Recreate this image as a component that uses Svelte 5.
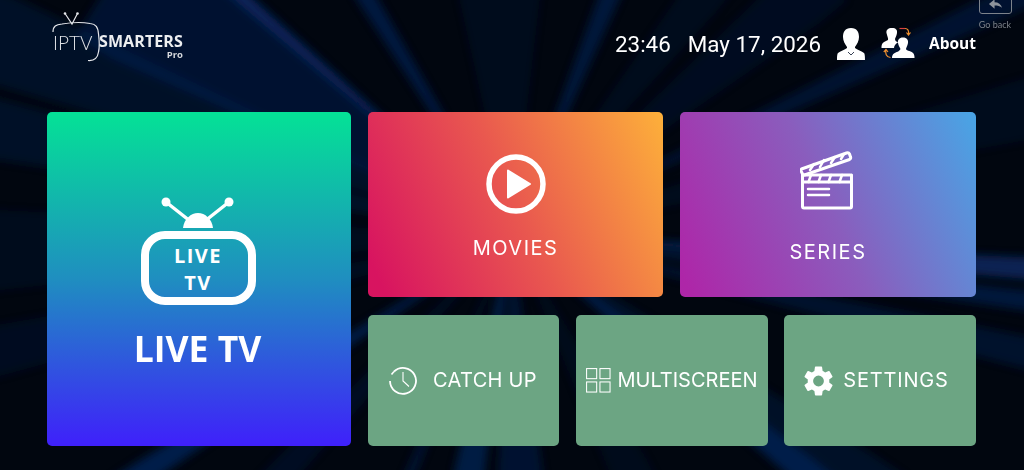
<script lang="ts">
	// end point on the page edge, half width there, opacity
	const rays = [
		[245, 0, 7, 0.65], [368, 0, 9, 0.5], [608, 0, 10, 0.45], [500, 0, 40, 0.15], [150, 0, 70, 0.35],
		[0, 40, 45, 0.25], [0, 130, 30, 0.25], [0, 250, 40, 0.15], [0, 350, 25, 0.18], [700, 0, 20, 0.15],
		[800, 0, 30, 0.18], [1010, 0, 14, 0.35], [1024, 110, 30, 0.15], [1024, 268, 11, 0.7],
		[1024, 300, 10, 0.45], [1024, 352, 16, 0.3], [804, 470, 14, 0.6], [860, 470, 20, 0.25],
		[520, 470, 22, 0.35], [470, 470, 15, 0.55], [412, 470, 5, 0.35], [285, 470, 14, 0.2], [147, 470, 12, 0.6],
		[630, 470, 20, 0.12]
	];

	function rayPoints(x: number, y: number, w: number) {
		const dx = x - 512;
		const dy = y - 235;
		const len = Math.hypot(dx, dy);
		const nx = (-dy / len) * w;
		const ny = (dx / len) * w;
		return `512,235 ${x + nx},${y + ny} ${x + dx * 0.1 + nx},${y + dy * 0.1 + ny} ${x + dx * 0.1 - nx},${y + dy * 0.1 - ny} ${x - nx},${y - ny}`;
	}
</script>

<div class="page">
	<svg class="rays" viewBox="0 0 1024 470" aria-hidden="true">
		<defs>
			<filter id="soft" x="-10%" y="-10%" width="120%" height="120%"><feGaussianBlur stdDeviation="4.500" /></filter>
		</defs>
		<g filter="url(#soft)" fill="#0a2d70">
			{#each rays as [x, y, w, o]}
				<polygon points={rayPoints(x, y, w)} opacity={o} />
			{/each}
		</g>
	</svg>

	<header class="top">
		<div class="logo">
			<svg class="logo-mark" viewBox="0 0 72 52" aria-hidden="true">
				<path d="M13 1.500 L20 12 L25.500 1.500" fill="none" stroke="#e4e6ea" stroke-width="1.200" />
				<circle cx="13" cy="1.500" r="1.300" fill="#e4e6ea" />
				<circle cx="25.500" cy="1.500" r="1.300" fill="#e4e6ea" />
				<path d="M1 20 C1 14 4 12.500 10 12 C22 10 30 10 38 11.500 C44 12 46 15 46.500 22 C47.500 30 47.500 36 46.500 40 C45.500 47 42 49 36 48.500" fill="none" stroke="#e4e6ea" stroke-width="1.200" />
			</svg>
			<span class="iptv">IPTV</span>
			<div class="brand">
				<span class="smarters">SMARTERS</span>
				<span class="pro">Pro</span>
			</div>
		</div>

		<div class="status">
			<span class="clock">23:46</span>
			<span class="date">May 17, 2026</span>
			<svg class="user" viewBox="0 0 28 32" aria-hidden="true">
				<path fill="#fff" d="M14 0 C20 0 22 4 22 9 C22 13 20 16 18 19 L18 20 C20 22 25 23 27 25 C28 26 28 30 28 32 L0 32 C0 30 0 26 1 25 C3 23 8 22 10 20 L10 19 C8 16 6 13 6 9 C6 4 8 0 14 0 Z" />
				<path fill="none" stroke="#06122b" stroke-width="0.800" d="M11 24 L14 27 L17 24" />
			</svg>
			<svg class="switch" viewBox="0 0 34 34" aria-hidden="true">
				<path fill="#fff" d="M11 1 C15 1 16.500 3 16 6 C15.500 9 14.500 10 14 12 C14 14 15.500 14.500 17 15.500 C14.500 16.500 13 19 13 21 L0.500 21 C0.500 17 1.500 15.500 4 14.500 L7 13 C7.500 11 6 9 5.500 6 C5 3 7 1 11 1 Z" />
				<path fill="#fff" d="M22 10.500 C26 10.500 27.500 13 27 16 C26.500 18.500 25.500 20 25 22 C25.500 24 31 24 32.500 26.500 C33.500 28 33.500 30 33.500 31 L11 31 C11 29 11.500 27.500 13 26.500 C15 25 18.500 24.500 19.500 22 C18.500 20 17.500 18.500 17 16 C16.500 13 18 10.500 22 10.500 Z" />
				<path fill="none" stroke="#d8423f" stroke-width="1.200" d="M18.500 1.500 H24" />
				<path fill="none" stroke="#f0902f" stroke-width="1.200" d="M24 1.500 C27 1.500 28 4 27.500 7 M25.500 5.500 L27.500 8 L29.500 5.500" />
				<path fill="none" stroke="#f0902f" stroke-width="1.200" d="M5 23 C4 26 5 30 9.500 30.500 M2.800 25 L5 22.500 L7 25" />
			</svg>
			<span class="about">About</span>
		</div>

		<div class="back">
			<div class="back-box">
				<svg viewBox="0 0 16 10" aria-hidden="true">
					<path fill="#8d939b" d="M1 5 L7 0 L7 3 C11 3 14 5 15 9 C13 7 10 6.500 7 6.500 L7 10 Z" />
				</svg>
			</div>
			<span>Go back</span>
		</div>
	</header>

	<main class="grid">
		<a class="card live" href="#live">
			<svg class="tv" viewBox="0 0 117 108" aria-hidden="true">
				<g fill="none" stroke="#fff">
					<path stroke-width="3.500" stroke-linecap="round" d="M26 5 L50 24 M89 5 L65 24" />
					<rect x="5" y="38" width="107" height="66" rx="20" stroke-width="8" />
				</g>
				<circle cx="26" cy="5" r="4.500" fill="#fff" />
				<circle cx="89" cy="5" r="4.500" fill="#fff" />
				<path fill="#fff" d="M43 31 C44 22 51 16 58 16 C65 16 72 22 73 31 Z" />
				<text x="58" y="65.500" class="tv-text">LIVE</text>
				<text x="58" y="93" class="tv-text">TV</text>
			</svg>
			<span class="live-label">LIVE TV</span>
		</a>

		<a class="card movies" href="#movies">
			<svg class="play" viewBox="0 0 60 60" aria-hidden="true">
				<circle cx="30" cy="30" r="27" fill="none" stroke="#fff" stroke-width="5.500" />
				<path fill="#fff" stroke="#fff" stroke-width="2" stroke-linejoin="round" d="M22 16.500 L44 30 L22 43.500 Z" />
			</svg>
			<span class="label wide">MOVIES</span>
		</a>

		<a class="card series" href="#series">
			<svg class="clapper" viewBox="0 0 54 60" aria-hidden="true">
				<g fill="none" stroke="#fff" stroke-width="3" stroke-linejoin="round" stroke-linecap="round">
					<rect x="2.500" y="25" width="49" height="33" rx="1.500" />
					<path d="M2.500 25 L2.500 32 L51.500 32 L51.500 25" />
					<path d="M1.500 19 L46.500 3 C48 2.500 49 3 49.500 4 L50.500 7 C51 8 50.500 9 49.500 9.500 L4.500 25 C3.500 25.500 3 25 2.500 24 L1 21 C1 20 1 19.500 1.500 19 Z" />
					<path d="M10 20 L14 14 M20 17 L24 10 M31 13 L35 7 M41 9 L44 4" stroke-width="2.500" />
					<path d="M11 25 L8.500 32 M21 25 L18.500 32 M31 25 L28.500 32 M42 25 L39.500 32" stroke-width="2.500" />
					<path d="M8 39 H29 M8 45 H29" stroke-width="2.500" />
				</g>
			</svg>
			<span class="label wide series-label">SERIES</span>
		</a>

		<div class="bottom">
			<a class="card tile catchup" href="#catchup">
				<svg class="tile-icon clock-icon" viewBox="0 0 30 30" aria-hidden="true">
					<path fill="none" stroke="#fff" stroke-width="1.800" d="M6 5.500 A13 13 0 1 1 2 15" />
					<path fill="none" stroke="#fff" stroke-width="1.600" d="M6 5.500 L3.500 8.500" />
					<path fill="none" stroke="#fff" stroke-width="1.100" d="M15 6 V15 L21 20.500" />
				</svg>
				<span class="label">CATCH UP</span>
			</a>
			<a class="card tile multi" href="#multiscreen">
				<svg class="tile-icon grid-icon" viewBox="0 0 26 26" aria-hidden="true">
					<g fill="none" stroke="#fff" stroke-width="1.100">
						<rect x=".6" y=".6" width="10.500" height="10.500" />
						<rect x="14.500" y=".6" width="10.500" height="10.500" />
						<rect x=".6" y="14.500" width="10.500" height="10.500" />
						<rect x="14.500" y="14.500" width="10.500" height="10.500" />
					</g>
				</svg>
				<span class="label tight">MULTISCREEN</span>
			</a>
			<a class="card tile settings" href="#settings">
				<svg class="tile-icon gear-icon" viewBox="2.500 2 19 20" aria-hidden="true">
					<path fill="#fff" d="M19.140 12.940c.04-.3.060-.61.060-.94s-.02-.64-.07-.94l2.030-1.580a.49.49 0 0 0 .12-.61l-1.920-3.320a.49.49 0 0 0-.59-.22l-2.390.96a7 7 0 0 0-1.620-.94l-.36-2.540a.48.48 0 0 0-.48-.41h-3.840a.48.48 0 0 0-.47.41l-.36 2.540c-.59.24-1.130.56-1.620.94l-2.390-.96a.49.49 0 0 0-.59.22L2.740 8.870a.48.48 0 0 0 .12.61l2.030 1.580c-.05.3-.07.63-.07.94s.02.64.07.94l-2.030 1.580a.49.49 0 0 0-.12.61l1.920 3.320c.12.22.37.29.59.22l2.390-.96c.5.38 1.030.7 1.620.94l.36 2.540c.05.24.24.41.48.41h3.840c.24 0 .44-.17.47-.41l.36-2.540c.59-.24 1.130-.56 1.620-.94l2.390.96c.22.080.47 0 .59-.22l1.920-3.320a.48.48 0 0 0-.12-.61l-2.010-1.580zM12 15.600a3.600 3.600 0 1 1 0-7.200 3.600 3.600 0 0 1 0 7.200z" />
				</svg>
				<span class="label wider">SETTINGS</span>
			</a>
		</div>
	</main>
</div>

<style>
	:global(body) {
		margin: 0;
		background: #000;
	}

	.page {
		position: relative;
		width: 1024px;
		height: 470px;
		overflow: hidden;
		box-sizing: border-box;
		background: #01060f;
		font-family: 'Open Sans', sans-serif;
		color: #fff;
	}

	.rays {
		position: absolute;
		inset: 0;
		width: 100%;
		height: 100%;
	}

	.top {
		position: relative;
		height: 112px;
	}

	.logo {
		position: absolute;
		left: 52px;
		top: 12px;
		width: 140px;
		height: 52px;
		display: flex;
	}

	.logo-mark {
		position: absolute;
		left: 0;
		top: 0;
		width: 72px;
		height: 52px;
	}

	.iptv {
		position: absolute;
		left: 1px;
		top: 19px;
		font: 300 19px 'Lato', sans-serif;
		color: #dfe2e6;
	}

	.brand {
		position: absolute;
		left: 47px;
		top: 21px;
		display: flex;
		flex-direction: column;
		align-items: flex-end;
	}

	.smarters {
		font: 700 16px/17px 'Open Sans', sans-serif;
		color: #eceef0;
		letter-spacing: 0.1px;
	}

	.pro {
		font: 700 9.500px/10px 'Open Sans', sans-serif;
		color: #d5d8dc;
	}

	.status {
		position: absolute;
		right: 48px;
		top: 26px;
		display: flex;
		align-items: center;
		height: 36px;
	}

	.clock {
		font: 400 22.400px 'Roboto', sans-serif;
		margin-right: 17px;
	}

	.date {
		font: 400 22.400px 'Roboto', sans-serif;
		margin-right: 16px;
	}

	.user {
		width: 28px;
		height: 32px;
		margin-right: 16px;
	}

	.switch {
		width: 34px;
		height: 34px;
		margin-right: 14px;
	}

	.about {
		font: 700 15.500px 'Open Sans', sans-serif;
		margin-bottom: 3px;
	}

	.back {
		position: absolute;
		left: 978px;
		top: -12px;
		width: 34px;
		display: flex;
		flex-direction: column;
		align-items: center;
	}

	.back-box {
		box-sizing: border-box;
		width: 33px;
		height: 26px;
		border: 1px solid #7d838b;
		border-radius: 3px;
		display: flex;
		align-items: flex-end;
		justify-content: center;
		padding-bottom: 4px;
	}

	.back-box svg {
		width: 15px;
		height: 10px;
	}

	.back span {
		font: 400 9px/11px 'Lato', sans-serif;
		color: #7d838b;
		margin-top: 5px;
		white-space: nowrap;
	}

	.grid {
		position: relative;
		display: grid;
		grid-template-columns: 304px 295px 296px;
		grid-template-rows: 185px 131px;
		column-gap: 17px;
		row-gap: 18px;
		margin-left: 47px;
	}

	.card {
		display: flex;
		flex-direction: column;
		align-items: center;
		border-radius: 5px;
		color: #fff;
		text-decoration: none;
	}

	.live {
		grid-row: 1 / 3;
		background: linear-gradient(180deg, #04e296 0%, #1f8ec0 50%, #3f20fb 100%);
		padding-top: 85px;
	}

	.tv {
		width: 117px;
		height: 108px;
		margin-right: 1px;
	}

	.tv-text {
		font: 700 20px 'Open Sans', sans-serif;
		letter-spacing: 1.500px;
		fill: #fff;
		text-anchor: middle;
	}

	.live-label {
		font: 700 35.500px/44px 'Open Sans', sans-serif;
		margin-top: 21px;
		margin-right: 3px;
	}

	.movies {
		background: linear-gradient(65deg, #d81460 5%, #e9584f 50%, #fdb03a 100%);
		padding-top: 42px;
	}

	.play {
		width: 60px;
		height: 60px;
	}

	.movies .label {
		margin-top: 22px;
	}

	.series {
		background: linear-gradient(65deg, #ae26a8 3%, #8a5dbd 50%, #4aa3e4 98%);
		padding-top: 38px;
	}

	.clapper {
		width: 54px;
		height: 60px;
		margin-right: 2px;
	}

	.series-label {
		margin-top: 30px;
	}

	.label {
		font: 400 20px/24px 'Inter', sans-serif;
		letter-spacing: 0.3px;
		margin-bottom: 2px;
	}

	.wide {
		letter-spacing: 1.500px;
		margin-bottom: 0;
	}

	.tight {
		letter-spacing: 0;
	}

	.wider {
		letter-spacing: 0.800px;
	}

	.bottom {
		grid-column: 2 / 4;
		display: grid;
		grid-template-columns: 191px 192px 192px;
		column-gap: 16.500px;
	}

	.tile {
		flex-direction: row;
		justify-content: center;
		background: #6ca583;
		gap: 15px;
	}

	.catchup {
		padding-right: 2px;
	}

	.multi {
		gap: 6px;
		padding-left: 1px;
	}

	.settings {
		gap: 10px;
		padding-right: 7px;
	}

	.tile-icon {
		flex: none;
	}

	.clock-icon {
		width: 30px;
		height: 30px;
	}

	.grid-icon {
		width: 25px;
		height: 25px;
	}

	.gear-icon {
		width: 29px;
		height: 30px;
	}
</style>
